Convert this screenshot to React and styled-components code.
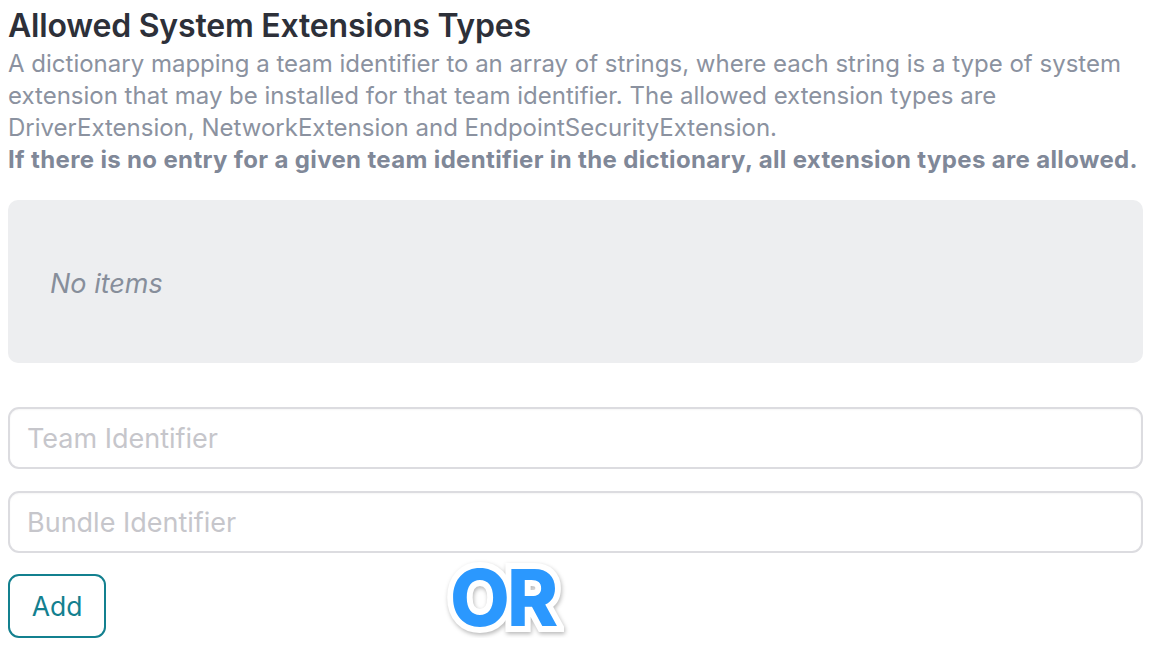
import React from "react";
import styled, { createGlobalStyle } from "styled-components";

const GlobalStyle = createGlobalStyle`
  html, body {
    margin: 0;
    padding: 0;
    background: #ffffff;
  }
  body {
    font-family: Inter, "Noto Sans", sans-serif;
    -webkit-font-smoothing: antialiased;
  }
`;

const Page = styled.div`
  position: relative;
  padding: 8px 17px 0 8px;
`;

const Title = styled.h2`
  margin: 0;
  font-size: 32px;
  line-height: 36px;
  font-weight: 600;
  color: #2d3039;
  letter-spacing: -0.2px;
`;

const Description = styled.p`
  margin: 4px 0 0;
  font-size: 24px;
  line-height: 32px;
  color: #8b92a0;
  strong {
    display: block;
    font-weight: 700;
    letter-spacing: 0.35px;
    color: #808898;
  }
`;

const EmptyList = styled.div`
  margin-top: 24px;
  height: 163px;
  border-radius: 10px;
  background: #edeef0;
  display: flex;
  align-items: center;
  padding: 4px 42px 0;
  box-sizing: border-box;
  font-style: italic;
  font-size: 27px;
  color: #878e9b;
`;

const Form = styled.div`
  margin-top: 44px;
  display: flex;
  flex-direction: column;
  gap: 22px;
`;

const Input = styled.input`
  box-sizing: border-box;
  width: 100%;
  height: 62px;
  border: 2px solid #dcdce0;
  border-radius: 11px;
  padding: 0 17px;
  font-family: Inter, "Noto Sans", sans-serif;
  font-size: 27px;
  color: #2d3039;
  outline: none;
  box-shadow: inset 0 1px 2px rgba(0, 0, 0, 0.04);
  &::placeholder {
    color: #c6c6cb;
  }
`;

const AddButton = styled.button`
  margin-top: 21px;
  width: 98px;
  height: 64px;
  border: 2px solid #13808f;
  border-radius: 11px;
  background: #ffffff;
  color: #13808f;
  font-family: Inter, "Noto Sans", sans-serif;
  font-size: 26.5px;
  padding: 0;
  cursor: pointer;
`;

const Sticker = styled.div`
  position: absolute;
  left: 450px;
  top: 549px;
  font-family: Inter, "Liberation Sans", sans-serif;
  font-weight: 800;
  font-size: 79px;
  line-height: 96px;
  letter-spacing: -3px;
  color: #2b98fe;
  -webkit-text-stroke: 12px #ffffff;
  paint-order: stroke fill;
  filter: drop-shadow(1px 2px 2px rgba(0, 0, 0, 0.28));
  transform: scaleX(0.98);
  transform-origin: left center;
  pointer-events: none;
`;

export default function App() {
  return (
    <>
      <GlobalStyle />
      <Page>
        <Title>Allowed System Extensions Types</Title>
        <Description>
          A dictionary mapping a team identifier to an array of strings, where
          each string is a type of system extension that may be installed for
          that team identifier. The allowed extension types are
          DriverExtension, NetworkExtension and EndpointSecurityExtension.
          <strong>
            If there is no entry for a given team identifier in the dictionary,
            all extension types are allowed.
          </strong>
        </Description>
        <EmptyList>No items</EmptyList>
        <Form>
          <Input placeholder="Team Identifier" />
          <Input placeholder="Bundle Identifier" />
        </Form>
        <AddButton>Add</AddButton>
        <Sticker>OR</Sticker>
      </Page>
    </>
  );
}
